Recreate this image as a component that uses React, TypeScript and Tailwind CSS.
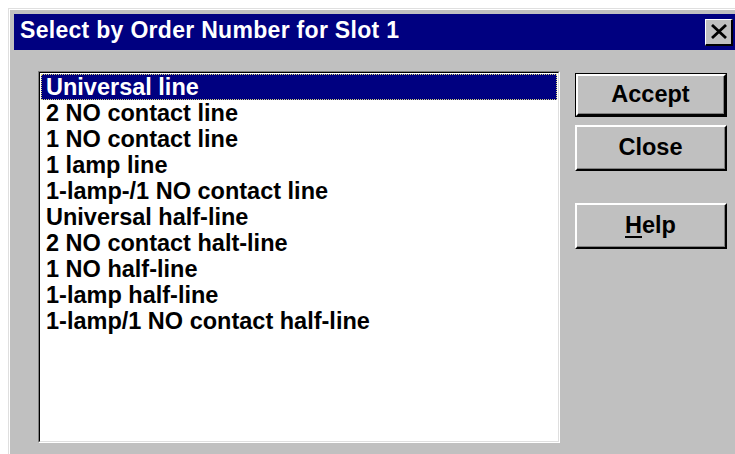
import { useState } from "react";

const items = [
  "Universal line",
  "2 NO contact line",
  "1 NO contact line",
  "1 lamp line",
  "1-lamp-/1 NO contact line",
  "Universal half-line",
  "2 NO contact halt-line",
  "1 NO half-line",
  "1-lamp half-line",
  "1-lamp/1 NO contact half-line",
];

const font = { fontFamily: '"Liberation Sans", Arial, sans-serif' };

function Button({ children, isDefault = false, className = "" }: { children: React.ReactNode; isDefault?: boolean; className?: string }) {
  return (
    <div className={`w-[152px] ${isDefault ? "border border-black" : ""} ${className}`}>
      <div className="h-full border-t-2 border-l-2 border-t-white border-l-white border-r-2 border-b-2 border-r-black border-b-black">
        <div className="h-full flex items-center justify-center border-r border-b border-r-[#808080] border-b-[#808080] text-[23.5px] font-bold text-black">
          {children}
        </div>
      </div>
    </div>
  );
}

export default function App() {
  const [selected, setSelected] = useState(0);

  return (
    <div className="w-[735px] h-[454px] bg-white pt-[8px] pl-[8px] overflow-hidden" style={font}>
      <div className="w-[731px] h-[460px] bg-[#c0c0c0] border-t border-l border-[#dfdfdf]">
        <div className="h-full border-t border-l border-white">
          {/* title bar */}
          <div className="p-[4px]">
            <div className="h-[36px] bg-[#000080] flex items-center pl-[6px] pr-[2px]">
              <span className="text-white font-bold text-[23px] leading-none -mt-[3px] tracking-[0.3px]">
                Select by Order Number for Slot 1
              </span>
              <div className="ml-auto w-[28px] h-[27px] bg-[#c0c0c0] border-t border-l border-white border-r-2 border-b-2 border-r-black border-b-black flex items-center justify-center">
                <svg width="18" height="15" viewBox="0 0 18 15">
                  <path d="M2 1 L16 14 M16 1 L2 14" stroke="black" strokeWidth="2.8" />
                </svg>
              </div>
            </div>
          </div>

          {/* body */}
          <div className="flex pl-[28px] pt-[17px]">
            <div className="w-[522px] h-[372px] border-t border-l border-t-[#808080] border-l-[#808080] border-b border-r border-b-white border-r-white">
              <div className="h-full border-t border-l border-t-black border-l-black border-b border-r border-b-[#dfdfdf] border-r-[#dfdfdf] bg-white pt-[1px] px-[1px]">
                {items.map((t, i) => (
                  <div
                    key={t}
                    onClick={() => setSelected(i)}
                    className={`h-[26px] leading-[24px] pl-[4px] text-[23.5px] font-bold whitespace-nowrap border ${
                      i === selected ? "bg-[#000080] text-white border-dotted border-[#d8d47c]" : "text-black border-transparent"
                    }`}
                  >
                    {t}
                  </div>
                ))}
              </div>
            </div>

            <div className="ml-[15px] pt-[2px] flex flex-col">
              <Button isDefault className="h-[44px]">Accept</Button>
              <Button className="h-[46px] mt-[8px]">Close</Button>
              <Button className="h-[46px] mt-[32px]">
                <span>
                  <span className="underline underline-offset-[3px] decoration-2">H</span>elp
                </span>
              </Button>
            </div>
          </div>
        </div>
      </div>
    </div>
  );
}
